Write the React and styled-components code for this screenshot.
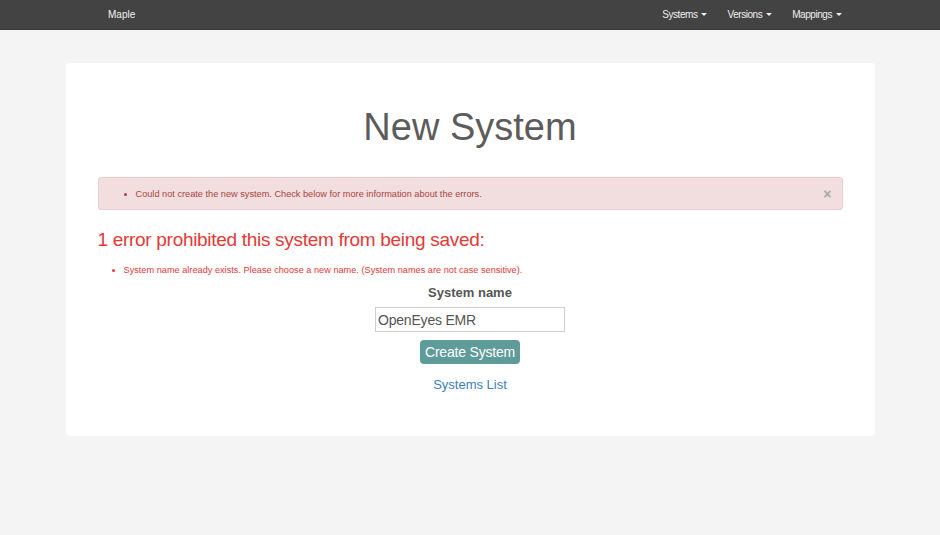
import React from 'react'
import styled, { createGlobalStyle } from 'styled-components'

const GlobalStyle = createGlobalStyle`
  html, body {
    margin: 0;
    padding: 0;
    background: #f4f4f4;
    font-family: "Liberation Sans", Arial, sans-serif;
  }
  * { box-sizing: border-box; }
`

const NavBar = styled.nav`
  height: 30px;
  background: #434343;
  border-bottom: 1px solid #3a3a3a;
`

const NavInner = styled.div`
  width: 744px;
  margin: 0 auto;
  height: 100%;
  display: flex;
  align-items: center;
  justify-content: space-between;
  padding: 0 0 1px 10px;
`

const Brand = styled.a`
  color: #f2f2f2;
  font-size: 10px;
  text-decoration: none;
`

const NavMenu = styled.ul`
  display: flex;
  list-style: none;
  margin: 0;
  padding: 0;
  gap: 20px;
`

const NavItem = styled.li`
  color: #eeeeee;
  font-size: 10px;
  letter-spacing: -0.45px;
  display: flex;
  align-items: center;
`

const Caret = styled.span`
  display: inline-block;
  width: 0;
  height: 0;
  margin-left: 4px;
  border-top: 3px solid #eee;
  border-left: 3px solid transparent;
  border-right: 3px solid transparent;
`

const Card = styled.main`
  width: 809px;
  margin: 33px auto 0;
  background: #fff;
  border-radius: 4px;
  padding: 42px 32px 44px;
`

const Title = styled.h1`
  margin: 0 0 27px;
  text-align: center;
  font-size: 38px;
  font-weight: 400;
  color: #5c5c5c;
  line-height: 45px;
`

const Alert = styled.div`
  background: #f2dede;
  border: 1px solid #ebccd1;
  border-radius: 3px;
  color: #a94442;
  height: 33px;
  display: flex;
  align-items: center;
  justify-content: space-between;
  padding: 1px 10px 0 0;
`

const BulletList = styled.ul`
  margin: 0;
  padding-left: ${p => p.$indent}px;
  color: ${p => p.$color};
  font-size: 9.2px;
`

const Close = styled.span`
  color: #a8a8a8;
  font-size: 14px;
  font-weight: 700;
`

const ErrorHeading = styled.h2`
  margin: 18px 0 13px;
  font-size: 19px;
  letter-spacing: -0.3px;
  font-weight: 400;
  color: #e53935;
  line-height: 24px;
`

const Form = styled.form`
  display: flex;
  flex-direction: column;
  align-items: center;
  margin-top: 10px;
`

const Label = styled.label`
  font-size: 13px;
  font-weight: 700;
  color: #555;
  margin-bottom: 7px;
`

const Input = styled.input`
  width: 190px;
  height: 25px;
  border: 1px solid #cfcfcf;
  font-family: inherit;
  font-size: 14px;
  letter-spacing: -0.2px;
  color: #555;
  padding: 0 2px;
  margin-bottom: 8px;
`

const Button = styled.button`
  background: #5f9b98;
  color: #fff;
  border: 0;
  border-radius: 4px;
  font-family: inherit;
  font-size: 14px;
  letter-spacing: -0.2px;
  height: 24px;
  padding: 0 5px;
  margin-bottom: 13px;
`

const Link = styled.a`
  color: #3b7fbf;
  font-size: 13px;
  text-decoration: none;
`

export default function App() {
  return (
    <>
      <GlobalStyle />
      <NavBar>
        <NavInner>
          <Brand href="#">Maple</Brand>
          <NavMenu>
            <NavItem>Systems<Caret /></NavItem>
            <NavItem>Versions<Caret /></NavItem>
            <NavItem>Mappings<Caret /></NavItem>
          </NavMenu>
        </NavInner>
      </NavBar>
      <Card>
        <Title>New System</Title>
        <Alert>
          <BulletList $indent={37} $color="#a94442">
            <li>Could not create the new system. Check below for more information about the errors.</li>
          </BulletList>
          <Close>×</Close>
        </Alert>
        <ErrorHeading>1 error prohibited this system from being saved:</ErrorHeading>
        <BulletList $indent={26} $color="#e53935">
          <li>System name already exists. Please choose a new name. (System names are not case sensitive).</li>
        </BulletList>
        <Form onSubmit={e => e.preventDefault()}>
          <Label htmlFor="name">System name</Label>
          <Input id="name" defaultValue="OpenEyes EMR" />
          <Button type="submit">Create System</Button>
          <Link href="#">Systems List</Link>
        </Form>
      </Card>
    </>
  )
}
